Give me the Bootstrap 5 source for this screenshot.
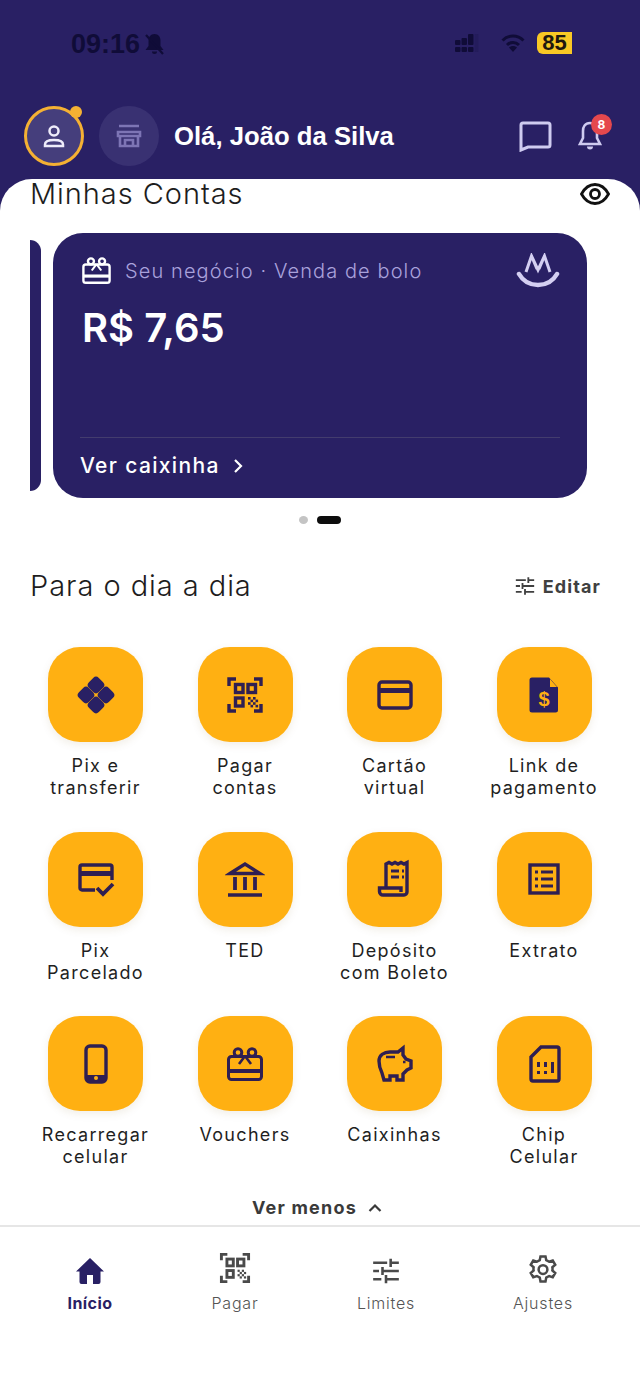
<!DOCTYPE html>
<html lang="pt-BR">
<head>
    <meta charset="UTF-8">
    <title>Início</title>
    <link href="https://cdn.jsdelivr.net/npm/bootstrap@5.3.3/dist/css/bootstrap.min.css" rel="stylesheet">
    <style>
        html, body { height: 1388px; }
        body { width: 640px; overflow: hidden; background: #292064; font-family: Inter, "Liberation Sans", sans-serif; color: #222; }
        svg { display: block; flex: none; }

        .status-bar { height: 106px; padding: 32px 68px 0 71px; color: #100c38; }
        .clock { font: 700 27px/24px "Liberation Sans", sans-serif; color: #100c38; }
        .signal { margin-right: 20px; }
        .battery { width: 35px; height: 22px; background: #f9c825; border-radius: 6px 0 0 6px; color: #20180f; font: 700 22px/22px "Liberation Sans", sans-serif; text-align: center; }

        .top-bar { height: 73px; padding: 0 38px 13px 24px; }
        .avatar { width: 60px; height: 60px; border-radius: 50%; background: #453e7c; border: 3px solid #f5b133; color: #eeecfa; }
        .avatar-dot { top: -3px; right: -1px; width: 12px; height: 12px; border-radius: 50%; background: #f5b133; }
        .store { width: 60px; height: 60px; border-radius: 50%; background: #393172; color: #7d75b5; margin-left: 15px; }
        .greeting { font: 700 25.7px/30px "Liberation Sans", sans-serif; color: #fff; margin-left: 15px; }
        .chat-icon { margin-right: 26px; }
        .bell-badge { top: -7px; right: -10px; width: 21px; height: 21px; border-radius: 50%; background: #e5484d; color: #fff; font: 700 12px/21px Inter, sans-serif; text-align: center; }

        .sheet { height: 1209px; background: #fff; border-radius: 32px 32px 0 0; }
        .section-title { font-weight: 300; font-size: 29px; line-height: 30px; letter-spacing: .95px; color: #1d1d1d; margin: 0 0 0 -1px; }
        .accounts-head { padding: 0 30px 0 31px; height: 54px; }

        .slider { padding-left: 30px; height: 265px; }
        .stub { width: 11px; height: 251px; background: #292064; border-radius: 0 14px 14px 0; margin-right: 12px; }
        .account { width: 534px; height: 265px; background: #292064; border-radius: 30px; padding: 20px 27px 0 27px; color: #fff; }
        .account-gift { margin-left: 2px; }
        .account-label { font-size: 20px; line-height: 34px; color: #a9a2dc; letter-spacing: 1.1px; font-weight: 300; margin-left: 14px; }
        .balance { font-size: 40px; font-weight: 600; line-height: 46px; margin: 17px 0 0 2px; }
        .account hr { margin: 86px 0 0; border: 0; border-top: 1px solid #433c6e; opacity: 1; }
        .account-link { font-size: 21px; font-weight: 500; line-height: 26px; letter-spacing: 1.35px; margin-top: 15px; }

        .dots { margin-top: 18px; height: 8px; padding-left: 299px; gap: 9px; }
        .dot-off { width: 9px; height: 8px; border-radius: 50%; background: #c4c4c4; }
        .dot-on { width: 24px; height: 8px; border-radius: 4px; background: #0d0d0d; }

        .day-head { padding: 0 39px 0 31px; margin-top: 47px; height: 30px; }
        .edit-link { font-size: 18px; font-weight: 700; color: #404040; letter-spacing: 1.1px; gap: 8px; }

        .shortcuts { display: grid; grid-template-columns: repeat(4, 149.5px); grid-auto-rows: 184.5px; padding-left: 20.75px; margin-top: 46px; }
        .tile { width: 95px; height: 95px; background: #ffb012; border-radius: 32px; box-shadow: 0 3px 9px rgba(120, 90, 20, .1); color: #2f1f52; }
        .tile-name { font-size: 18px; line-height: 22px; letter-spacing: 1.3px; color: #1f1f1f; text-align: center; margin-top: 13px; }

        .less-link { height: 30px; margin-top: -8px; padding-right: 6px; font-size: 18px; font-weight: 700; color: #3a3a3a; letter-spacing: 1.2px; gap: 11px; }
        .bottom-nav { border-top: 2px solid #e6e6e6; margin-top: 2px; height: 160px; }
        .nav-cell { width: 120px; color: #4a4a4a; font-size: 16px; font-weight: 300; letter-spacing: .8px; }
        .nav-slot { height: 66px; }
        .nav-cell span { line-height: 20px; color: #555; }
        .nav-on { color: #292064; }
        .nav-on span { color: #292064; font-weight: 700; letter-spacing: .4px; }
        .nav-grid { display: grid; grid-template-columns: 145px 151px 157px 120px; padding-left: 30px; }
        .nav-slot-icon { padding-bottom: 8px; }
        .navy-mark { color: #292064; }
    </style>
</head>
<body>

<svg width="0" height="0" class="position-absolute">
    <symbol id="i-qr" viewBox="0 0 40 40">
        <g fill="none" stroke="currentColor" stroke-width="3.4">
            <path d="M4 11V4h7M29 4h7v7M4 29v7h7M36 29v7h-7"/>
            <rect x="10.500" y="9.500" width="7.500" height="8"/>
            <rect x="23" y="9.500" width="7.500" height="8"/>
            <rect x="10.500" y="23" width="7.500" height="8"/>
        </g>
        <g fill="currentColor">
            <rect x="23" y="22" width="2.600" height="2.600"/><rect x="28" y="22" width="2.600" height="2.600"/>
            <rect x="25.500" y="24.600" width="2.600" height="2.600"/><rect x="30.500" y="24.600" width="2.600" height="2.600"/>
            <rect x="23" y="27.200" width="2.600" height="2.600"/><rect x="28" y="27.200" width="2.600" height="2.600"/>
            <rect x="25.500" y="29.800" width="2.600" height="2.600"/><rect x="30.500" y="29.800" width="2.600" height="2.600"/>
        </g>
    </symbol>
    <symbol id="i-sliders" viewBox="0 0 24 24">
        <path fill="none" stroke="currentColor" stroke-width="2.200" d="M1 5h12M16 1.500v7M16 5h7M1 12h5M9 8.500v7M9 12h14M1 19h7M12 15.500v7M12 19h11"/>
    </symbol>
    <symbol id="i-gift" viewBox="0 0 36 34">
        <g fill="none" stroke="currentColor" stroke-width="3">
            <rect x="1.500" y="9.500" width="33" height="23" rx="3"/>
            <path stroke-width="4" d="M2 24h32"/>
            <circle cx="11" cy="5.500" r="3.800"/>
            <circle cx="25" cy="5.500" r="3.800"/>
            <path stroke-width="2.600" d="M18 9l-6 8M18 9l6 8"/>
        </g>
    </symbol>
</svg>

<div class="status-bar d-flex justify-content-between align-items-start">
    <div class="d-flex align-items-center gap-1 clock">
        <span>09:16</span>
        <svg width="21" height="23" viewBox="0 0 21 23" fill="currentColor">
            <path d="M10.500 1c-4 0-6 3-6 7v5l-3 4h18l-3-4V8c0-4-2-7-6-7zM8 18.500a2.500 2.500 0 0 0 5 0z"/>
            <path stroke="currentColor" stroke-width="2.200" d="M2 2l17 19"/>
        </svg>
    </div>
    <div class="d-flex align-items-center">
        <svg width="26" height="22" viewBox="0 0 26 22" fill="currentColor" class="signal">
            <rect x="0" y="8" width="5.500" height="5" rx="1"/><rect x="6.500" y="6" width="5.500" height="7" rx="1"/><rect x="13" y="2" width="5.500" height="11" rx="1"/>
            <rect x="0" y="15" width="5.500" height="5" rx="1"/><rect x="6.500" y="15" width="5.500" height="5" rx="1"/><rect x="13" y="15" width="5.500" height="5" rx="1"/>
            <rect x="19.500" y="2" width="4" height="18" rx="1" opacity=".18"/>
        </svg>
        <svg width="24" height="20" viewBox="0 0 24 20" fill="none" stroke="currentColor" class="me-2">
            <path stroke-width="3" d="M1.500 7.500c6-6 15-6 21 0M6 12c3.500-3.500 8.500-3.500 12 0"/>
            <path fill="currentColor" stroke="none" d="M12 19l-4-4.500c2-2 6-2 8 0z"/>
        </svg>
        <div class="battery ms-1">85</div>
    </div>
</div>

<div class="top-bar d-flex align-items-center">
    <div class="avatar position-relative d-flex align-items-center justify-content-center">
        <svg width="24" height="24" viewBox="0 0 24 24" fill="none" stroke="currentColor" stroke-width="2.500">
            <circle cx="12" cy="7" r="4.500"/>
            <path d="M3 22v-1.500c0-3 2.500-4.500 9-4.500s9 1.500 9 4.500V22z"/>
        </svg>
        <div class="avatar-dot position-absolute"></div>
    </div>
    <div class="store d-flex align-items-center justify-content-center">
        <svg width="26" height="24" viewBox="0 0 26 24" fill="none" stroke="currentColor" stroke-width="2.600">
            <path d="M3 2h20M2 8h22v4H2zM4 12v10h18V12M9 22v-6h8v6"/>
        </svg>
    </div>
    <div class="greeting flex-grow-1">Olá, João da Silva</div>
    <svg width="33" height="31" viewBox="0 0 33 31" fill="none" stroke="#cfcbf0" stroke-width="3" class="chat-icon">
        <path d="M4 2h25a2 2 0 0 1 2 2v20a2 2 0 0 1-2 2H9l-7 3V4a2 2 0 0 1 2-2z"/>
    </svg>
    <div class="position-relative">
        <svg width="24" height="30" viewBox="0 0 24 30" fill="none" stroke="#cfcbf0" stroke-width="2.600">
            <path d="M12 2c-5 0-7 4-7 8v7l-3 6h20l-3-6v-7c0-4-2-8-7-8z"/>
            <path fill="#cfcbf0" stroke="none" d="M9 25.500h6a3 3 0 0 1-6 0z"/>
        </svg>
        <div class="bell-badge position-absolute">8</div>
    </div>
</div>

<div class="sheet">
    <div class="accounts-head d-flex justify-content-between align-items-start">
        <h2 class="section-title">Minhas Contas</h2>
        <svg width="30" height="22" viewBox="0 0 30 22" fill="none" stroke="#111" stroke-width="2.800" class="mt-1">
            <path d="M1.500 11C5 4.500 9.500 1.500 15 1.500S25 4.500 28.500 11C25 17.500 20.500 20.500 15 20.500S5 17.500 1.500 11z"/>
            <circle cx="15" cy="11" r="4.500"/>
        </svg>
    </div>

    <div class="slider d-flex align-items-center overflow-hidden">
        <div class="stub"></div>
        <div class="account">
            <div class="d-flex align-items-center">
                <svg width="29" height="27" class="account-gift"><use href="#i-gift" width="29" height="27"/></svg>
                <div class="account-label flex-grow-1">Seu negócio · Venda de bolo</div>
                <svg width="44" height="35" viewBox="0 0 44 35" fill="none" stroke="#d4cff2">
                    <path stroke-width="3" d="M10 19L15.500 3 21 16M23 16l5.500-13L34 19M15.500 3L22 17l6.500-14"/>
                    <path stroke-width="4.500" stroke-linecap="round" d="M3 21c4 7 11 11 19 11s15-4 19-11"/>
                </svg>
            </div>
            <div class="balance">R$ 7,65</div>
            <hr>
            <div class="account-link d-flex align-items-center gap-2">
                Ver caixinha
                <svg width="12" height="16" viewBox="0 0 12 16" fill="none" stroke="#fff" stroke-width="2.200" class="ms-1"><path d="M3 2l6 6-6 6"/></svg>
            </div>
        </div>
    </div>

    <div class="dots d-flex">
        <div class="dot-off"></div>
        <div class="dot-on"></div>
    </div>

    <div class="day-head d-flex justify-content-between align-items-center">
        <h2 class="section-title">Para o dia a dia</h2>
        <div class="edit-link d-flex align-items-center">
            <svg width="20" height="20"><use href="#i-sliders" width="20" height="20"/></svg>
            Editar
        </div>
    </div>

    <div class="shortcuts">
        <div class="d-flex flex-column align-items-center">
            <div class="tile navy-mark d-flex align-items-center justify-content-center">
                <svg width="40" height="40" viewBox="0 0 40 40" fill="currentColor">
                    <rect x="-7" y="-7" width="14" height="14" rx="4" transform="translate(20 10) rotate(45)"/>
                    <rect x="-7" y="-7" width="14" height="14" rx="4" transform="translate(20 30) rotate(45)"/>
                    <rect x="-7" y="-7" width="14" height="14" rx="4" transform="translate(10 20) rotate(45)"/>
                    <rect x="-7" y="-7" width="14" height="14" rx="4" transform="translate(30 20) rotate(45)"/>
                </svg>
            </div>
            <div class="tile-name">Pix e<br>transferir</div>
        </div>
        <div class="d-flex flex-column align-items-center">
            <div class="tile d-flex align-items-center justify-content-center">
                <svg width="40" height="40"><use href="#i-qr" width="40" height="40"/></svg>
            </div>
            <div class="tile-name">Pagar<br>contas</div>
        </div>
        <div class="d-flex flex-column align-items-center">
            <div class="tile d-flex align-items-center justify-content-center">
                <svg width="40" height="40" viewBox="0 0 40 40" fill="none" stroke="currentColor" stroke-width="3.400">
                    <rect x="4" y="7" width="32" height="26" rx="3"/>
                    <path stroke-width="5" d="M4 15.500h32"/>
                </svg>
            </div>
            <div class="tile-name">Cartão<br>virtual</div>
        </div>
        <div class="d-flex flex-column align-items-center">
            <div class="tile navy-mark d-flex align-items-center justify-content-center">
                <svg width="40" height="40" viewBox="0 0 40 40">
                    <path fill="currentColor" d="M8 2.500h17l9 10V35a2.500 2.500 0 0 1-2.500 2.500H8A2.500 2.500 0 0 1 5.500 35V5A2.500 2.500 0 0 1 8 2.500z"/>
                    <path fill="#ffb012" d="M26 4v8h7z"/>
                    <text x="20" y="31" text-anchor="middle" font-family="Liberation Sans, sans-serif" font-weight="700" font-size="20" fill="#ffb012">$</text>
                </svg>
            </div>
            <div class="tile-name">Link de<br>pagamento</div>
        </div>

        <div class="d-flex flex-column align-items-center">
            <div class="tile d-flex align-items-center justify-content-center">
                <svg width="40" height="40" viewBox="0 0 40 40" fill="none" stroke="currentColor" stroke-width="3.400">
                    <path d="M19 31H6a2 2 0 0 1-2-2V8a2 2 0 0 1 2-2h28a2 2 0 0 1 2 2v13"/>
                    <path stroke-width="5" d="M4 14.500h32"/>
                    <path stroke-width="3.800" d="M21 29l6 6 10-10"/>
                </svg>
            </div>
            <div class="tile-name">Pix<br>Parcelado</div>
        </div>
        <div class="d-flex flex-column align-items-center">
            <div class="tile d-flex align-items-center justify-content-center">
                <svg width="40" height="40" viewBox="0 0 40 40" fill="none" stroke="currentColor" stroke-width="3.400">
                    <path d="M5 14.500L20 5l15 9.500z"/>
                    <path stroke-width="3.800" d="M10 18v13M20 18v13M30 18v13"/>
                    <path d="M3 36h34"/>
                </svg>
            </div>
            <div class="tile-name">TED</div>
        </div>
        <div class="d-flex flex-column align-items-center">
            <div class="tile d-flex align-items-center justify-content-center">
                <svg width="40" height="40" viewBox="0 0 40 40" fill="none" stroke="currentColor" stroke-width="3.400">
                    <path d="M11 29V5l3-1.500 3 1.500 3-1.500 3 1.500 3-1.500 3 1.500 3-1.500V33a3 3 0 0 1-3 3H8"/>
                    <path d="M8 36a3.500 3.500 0 0 1-3.500-3.500V29H26v4"/>
                    <path stroke-width="2.800" d="M16 12h8M27 12h2M16 18h8M27 18h2"/>
                </svg>
            </div>
            <div class="tile-name">Depósito<br>com Boleto</div>
        </div>
        <div class="d-flex flex-column align-items-center">
            <div class="tile d-flex align-items-center justify-content-center">
                <svg width="40" height="40" viewBox="0 0 40 40" fill="none" stroke="currentColor" stroke-width="3.400">
                    <rect x="6" y="6" width="28" height="28"/>
                    <path stroke-width="2.800" d="M11 13h3M17 13h12M11 20h3M17 20h12M11 27h3M17 27h12"/>
                </svg>
            </div>
            <div class="tile-name">Extrato</div>
        </div>

        <div class="d-flex flex-column align-items-center">
            <div class="tile d-flex align-items-center justify-content-center">
                <svg width="40" height="40" viewBox="0 0 40 40">
                    <rect x="10" y="2" width="20" height="36" rx="4" fill="none" stroke="currentColor" stroke-width="3.400"/>
                    <path fill="currentColor" d="M10 31h20v3a4 4 0 0 1-4 4H14a4 4 0 0 1-4-4z"/>
                    <circle cx="20" cy="34" r="2" fill="#ffb012"/>
                </svg>
            </div>
            <div class="tile-name">Recarregar<br>celular</div>
        </div>
        <div class="d-flex flex-column align-items-center">
            <div class="tile d-flex align-items-center justify-content-center">
                <svg width="40" height="40"><use href="#i-gift" x="2" y="3" width="36" height="34"/></svg>
            </div>
            <div class="tile-name">Vouchers</div>
        </div>
        <div class="d-flex flex-column align-items-center">
            <div class="tile d-flex align-items-center justify-content-center">
                <svg width="40" height="40" viewBox="0 0 40 40" fill="none" stroke="currentColor" stroke-width="3.400">
                    <path d="M4 17c0-6 5-9 11-9h8l5-4v7l3 4 5 2v7l-4 2-4 4v6h-6v-4h-7v4H9l-2-7c-1.500-3-3-6-3-12z"/>
                    <path stroke-width="2.500" d="M11 13h9M28 18h2.500"/>
                </svg>
            </div>
            <div class="tile-name">Caixinhas</div>
        </div>
        <div class="d-flex flex-column align-items-center">
            <div class="tile d-flex align-items-center justify-content-center">
                <svg width="40" height="40" viewBox="0 0 40 40" fill="none" stroke="currentColor" stroke-width="3.400">
                    <path d="M17 3h16a2 2 0 0 1 2 2v30a2 2 0 0 1-2 2H9a2 2 0 0 1-2-2V13z"/>
                    <g fill="currentColor" stroke="none">
                        <rect x="13" y="18" width="3" height="5"/><rect x="20" y="18" width="3" height="5"/><rect x="27" y="18" width="3" height="11"/>
                        <rect x="13" y="27" width="3" height="3"/><rect x="20" y="27" width="3" height="3"/>
                    </g>
                </svg>
            </div>
            <div class="tile-name">Chip<br>Celular</div>
        </div>
    </div>

    <div class="less-link d-flex justify-content-center align-items-center">
        Ver menos
        <svg width="14" height="10" viewBox="0 0 14 10" fill="none" stroke="#3a3a3a" stroke-width="2.200"><path d="M1.500 8L7 2.500 12.500 8"/></svg>
    </div>

    <div class="bottom-nav nav-grid">
        <div class="nav-cell nav-on d-flex flex-column align-items-center">
            <div class="nav-slot nav-slot-icon d-flex align-items-end">
                <svg width="30" height="28" viewBox="0 0 30 28" fill="currentColor">
                    <path d="M15 1L1 14.500h3.500V25a2 2 0 0 0 2 2H12v-9h6v9h5.500a2 2 0 0 0 2-2V14.500H29z"/>
                </svg>
            </div>
            <span>Início</span>
        </div>
        <div class="nav-cell d-flex flex-column align-items-center">
            <div class="nav-slot nav-slot-icon d-flex align-items-end">
                <svg width="34" height="34"><use href="#i-qr" width="34" height="34"/></svg>
            </div>
            <span>Pagar</span>
        </div>
        <div class="nav-cell d-flex flex-column align-items-center">
            <div class="nav-slot nav-slot-icon d-flex align-items-end">
                <svg width="28" height="28"><use href="#i-sliders" width="28" height="28"/></svg>
            </div>
            <span>Limites</span>
        </div>
        <div class="nav-cell d-flex flex-column align-items-center">
            <div class="nav-slot nav-slot-icon d-flex align-items-end">
                <svg width="30" height="31" viewBox="0 0 24 24" fill="none" stroke="currentColor" stroke-width="2">
                    <circle cx="12" cy="12" r="3.500"/>
                    <path d="M10 1.500h4l.6 3 2.300 1.300 2.900-1 2 3.400-2.300 2a7 7 0 0 1 0 2.600l2.300 2-2 3.400-2.900-1-2.300 1.300-.6 3h-4l-.6-3-2.300-1.300-2.900 1-2-3.400 2.300-2a7 7 0 0 1 0-2.600l-2.300-2 2-3.400 2.900 1 2.300-1.300z"/>
                </svg>
            </div>
            <span>Ajustes</span>
        </div>
    </div>
</div>

<script src="https://cdn.jsdelivr.net/npm/bootstrap@5.3.3/dist/js/bootstrap.bundle.min.js"></script>
</body>
</html>
